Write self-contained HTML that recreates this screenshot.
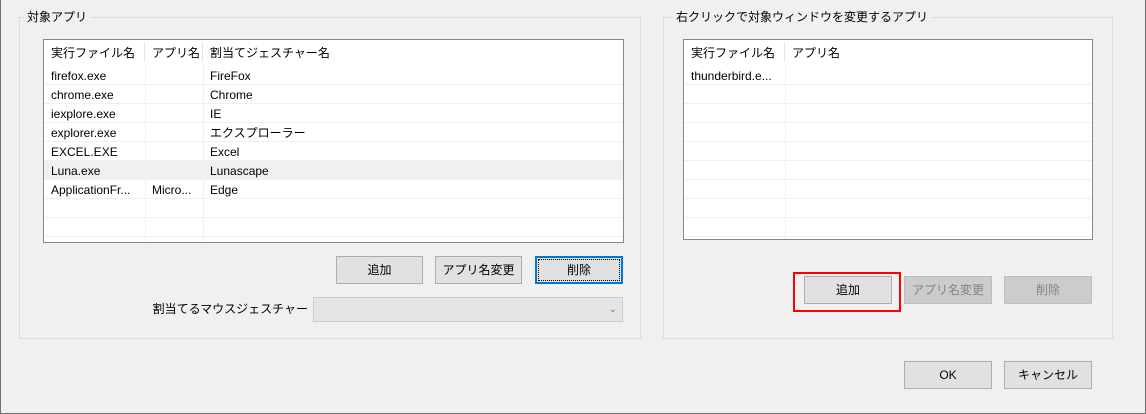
<!DOCTYPE html><html><head><meta charset="utf-8"><style>
*{box-sizing:border-box;margin:0;padding:0}
body{width:1146px;height:414px;background:#f0f0f0;position:relative;overflow:hidden;font-family:"Liberation Sans","Noto Sans CJK JP",sans-serif;font-size:12px;color:#000}
.a{position:absolute}
.grp{position:absolute;border:1px solid #dcdcdc}
.gt{position:absolute;background:#f0f0f0;padding:0 3px;top:-9px;line-height:16px;white-space:nowrap}
.lv{position:absolute;background:#fff;border:1px solid #828790;overflow:hidden}
.row{position:absolute;left:0;right:0;height:19px;border-bottom:1px solid #f0f0f0;line-height:20px;white-space:nowrap}
.c{position:absolute;top:0;bottom:0;padding-left:7px;overflow:hidden}
.vl{position:absolute;top:23px;bottom:0;width:1px;background:#f0f0f0}
.btn{position:absolute;background:#e1e1e1;border:1px solid #adadad;text-align:center;line-height:26px;white-space:nowrap}
.dis{background:#cccccc;border-color:#bfbfbf;color:#838383}
</style></head><body>
<div class="a" style="left:0;top:0;width:1px;height:414px;background:#707070"></div>
<div class="a" style="left:1145px;top:0;width:1px;height:414px;background:#707070"></div>
<div class="a" style="left:0;top:413px;width:1146px;height:1px;background:#707070"></div>

<div class="grp" style="left:19px;top:17px;width:622px;height:322px"><div class="gt" style="left:4px">対象アプリ</div></div>
<div class="lv" style="left:43px;top:39px;width:581px;height:204px">
 <div class="row" style="top:0;height:24px;border-bottom:none"><div class="c" style="left:0;width:101px;border-right:1px solid #e5e5e5;top:2px;bottom:2px;line-height:22px">実行ファイル名</div><div class="c" style="left:101px;width:58px;border-right:1px solid #e5e5e5;top:2px;bottom:2px;line-height:22px">アプリ名</div><div class="c" style="left:159px;width:420px;line-height:26px">割当てジェスチャー名</div></div>
 <div class="row" style="top:26px"><div class="c" style="left:0">firefox.exe</div><div class="c" style="left:159px">FireFox</div></div>
 <div class="row" style="top:45px"><div class="c" style="left:0">chrome.exe</div><div class="c" style="left:159px">Chrome</div></div>
 <div class="row" style="top:64px"><div class="c" style="left:0">iexplore.exe</div><div class="c" style="left:159px">IE</div></div>
 <div class="row" style="top:83px"><div class="c" style="left:0">explorer.exe</div><div class="c" style="left:159px">エクスプローラー</div></div>
 <div class="row" style="top:102px"><div class="c" style="left:0">EXCEL.EXE</div><div class="c" style="left:159px">Excel</div></div>
 <div class="row" style="top:121px;background:#f0f0f0"><div class="c" style="left:0">Luna.exe</div><div class="c" style="left:159px">Lunascape</div></div>
 <div class="row" style="top:140px"><div class="c" style="left:0;width:101px">ApplicationFr...</div><div class="c" style="left:101px;width:58px">Micro...</div><div class="c" style="left:159px">Edge</div></div>
 <div class="row" style="top:159px"></div><div class="row" style="top:178px"></div>
 <div class="vl" style="left:101px;top:24px"></div><div class="vl" style="left:159px;top:24px"></div>
</div>
<div class="btn" style="left:336px;top:256px;width:87px;height:28px">追加</div>
<div class="btn" style="left:435px;top:256px;width:87px;height:28px">アプリ名変更</div>
<div class="btn" style="left:535px;top:256px;width:88px;height:28px;border:2px solid #0078d7;line-height:24px"><div style="position:absolute;inset:1px;border:1px dotted #000"></div>削除</div>
<div class="a" style="left:150px;top:300px;width:158px;text-align:right;line-height:18px">割当てるマウスジェスチャー</div>
<div class="a" style="left:313px;top:297px;width:310px;height:25px;background:#e5e5e5;border:1px solid #cccccc"><div class="a" style="right:5px;top:2px;color:#777;font-size:10px;line-height:20px">&#8964;</div></div>

<div class="grp" style="left:663px;top:17px;width:450px;height:322px"><div class="gt" style="left:9px">右クリックで対象ウィンドウを変更するアプリ</div></div>
<div class="lv" style="left:683px;top:39px;width:410px;height:201px">
 <div class="row" style="top:0;height:24px;border-bottom:none"><div class="c" style="left:0;width:101px;border-right:1px solid #e5e5e5;top:2px;bottom:2px;line-height:22px">実行ファイル名</div><div class="c" style="left:101px;line-height:26px">アプリ名</div></div>
 <div class="row" style="top:26px"><div class="c" style="left:0;width:101px">thunderbird.e...</div></div>
 <div class="row" style="top:45px"></div><div class="row" style="top:64px"></div><div class="row" style="top:83px"></div><div class="row" style="top:102px"></div><div class="row" style="top:121px"></div><div class="row" style="top:140px"></div><div class="row" style="top:159px"></div><div class="row" style="top:178px"></div>
 <div class="vl" style="left:101px;top:24px"></div>
</div>
<div class="a" style="left:793px;top:272px;width:108px;height:40px;border:2px solid #ff0000"></div>
<div class="btn" style="left:804px;top:276px;width:88px;height:28px">追加</div>
<div class="btn dis" style="left:904px;top:276px;width:88px;height:28px">アプリ名変更</div>
<div class="btn dis" style="left:1004px;top:276px;width:88px;height:28px">削除</div>
<div class="btn" style="left:904px;top:361px;width:88px;height:28px">OK</div>
<div class="btn" style="left:1004px;top:361px;width:88px;height:28px">キャンセル</div>
</body></html>
